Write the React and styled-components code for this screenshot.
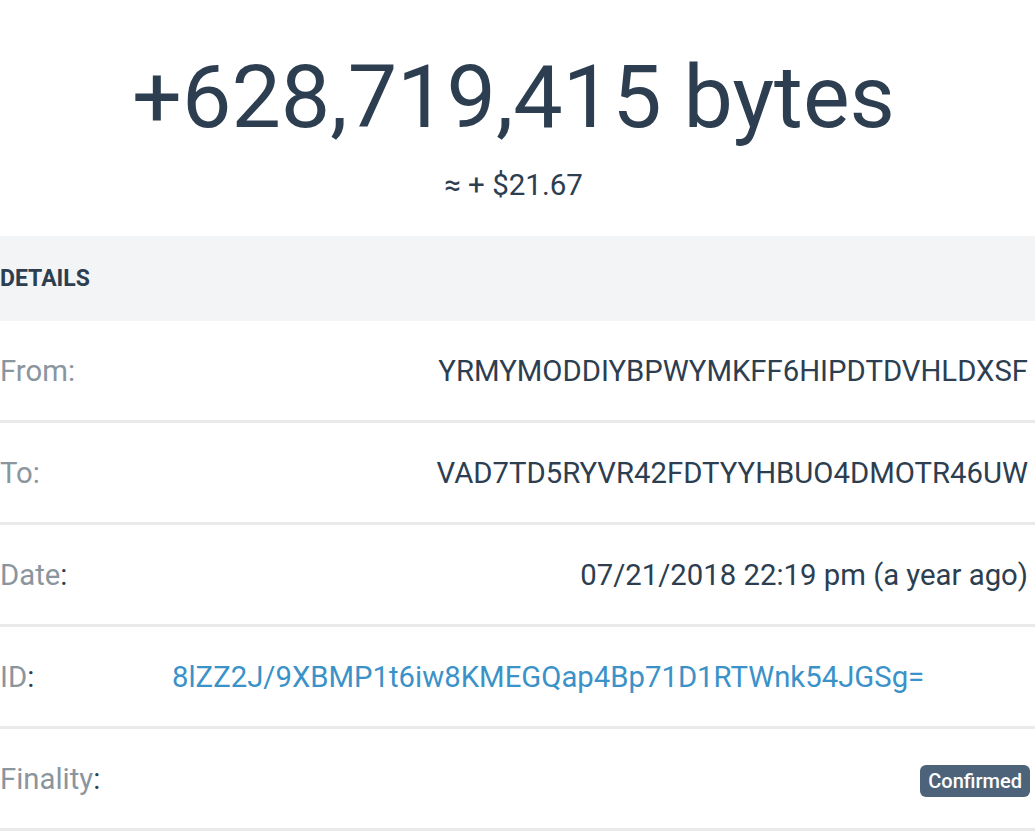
import React from "react";
import styled, { createGlobalStyle } from "styled-components";

const GlobalStyle = createGlobalStyle`
  html, body {
    margin: 0;
    padding: 0;
    background: #fff;
    font-family: Roboto, "Liberation Sans", sans-serif;
  }
`;

const rows = [
  { label: "From", value: "YRMYMODDIYBPWYMKFF6HIPDTDVHLDXSF" },
  { label: "To", value: "VAD7TD5RYVR42FDTYYHBUO4DMOTR46UW" },
  { label: "Date", value: "07/21/2018 22:19 pm (a year ago)", darkColon: true },
  { label: "ID", value: "8lZZ2J/9XBMP1t6iw8KMEGQap4Bp71D1RTWnk54JGSg=", link: true, darkColon: true },
  { label: "Finality", badge: "Confirmed", darkColon: true },
];

const Page = styled.div`
  width: 1035px;
  color: #2c3e50;
`;

const Hero = styled.div`
  display: flex;
  flex-direction: column;
  align-items: center;
  padding: 42px 8px 33px 0;
`;

const Amount = styled.h1`
  margin: 0;
  font-size: 88px;
  font-weight: 400;
  line-height: 110px;
  color: #2c3e50;
`;

const Fiat = styled.div`
  margin-top: 15px;
  font-size: 29.5px;
  line-height: 36px;
  color: #2c3e50;
`;

const SectionHeader = styled.div`
  height: 85px;
  display: flex;
  align-items: center;
  background: #f2f4f5;
  font-size: 23px;
  font-weight: 700;
  color: #2c3e50;
`;

const Row = styled.div`
  height: 99px;
  display: flex;
  align-items: center;
  border-bottom: 3px solid #e9eaea;
  padding-right: 7px;
  font-size: 29.3px;
`;

const Label = styled.div`
  width: 172px;
  flex: none;
  color: #8a959e;
`;

const Colon = styled.span`
  color: ${(p) => (p.$dark ? "#2c3e50" : "#8a959e")};
`;

const Value = styled.div`
  flex: 1;
  display: flex;
  justify-content: ${(p) => (p.$start ? "flex-start" : "flex-end")};
  color: #2c3e50;
  white-space: nowrap;
`;

const Link = styled.a`
  color: #3b92c8;
  text-decoration: none;
`;

const Badge = styled.span`
  display: inline-block;
  background: #4d637a;
  color: #fff;
  font-size: 20px;
  font-weight: 500;
  line-height: 28px;
  padding: 2px 8px 2px;
  border-radius: 6px;
  margin-right: -2px;
  margin-top: 4px;
`;

export default function App() {
  return (
    <Page>
      <GlobalStyle />
      <Hero>
        <Amount>+628,719,415 bytes</Amount>
        <Fiat>≈ + $21.67</Fiat>
      </Hero>
      <SectionHeader>DETAILS</SectionHeader>
      {rows.map((r) => (
        <Row key={r.label}>
          <Label>
            {r.label}
            <Colon $dark={r.darkColon}>:</Colon>
          </Label>
          <Value $start={r.link}>
            {r.badge ? (
              <Badge>{r.badge}</Badge>
            ) : r.link ? (
              <Link href="#">{r.value}</Link>
            ) : (
              r.value
            )}
          </Value>
        </Row>
      ))}
    </Page>
  );
}
